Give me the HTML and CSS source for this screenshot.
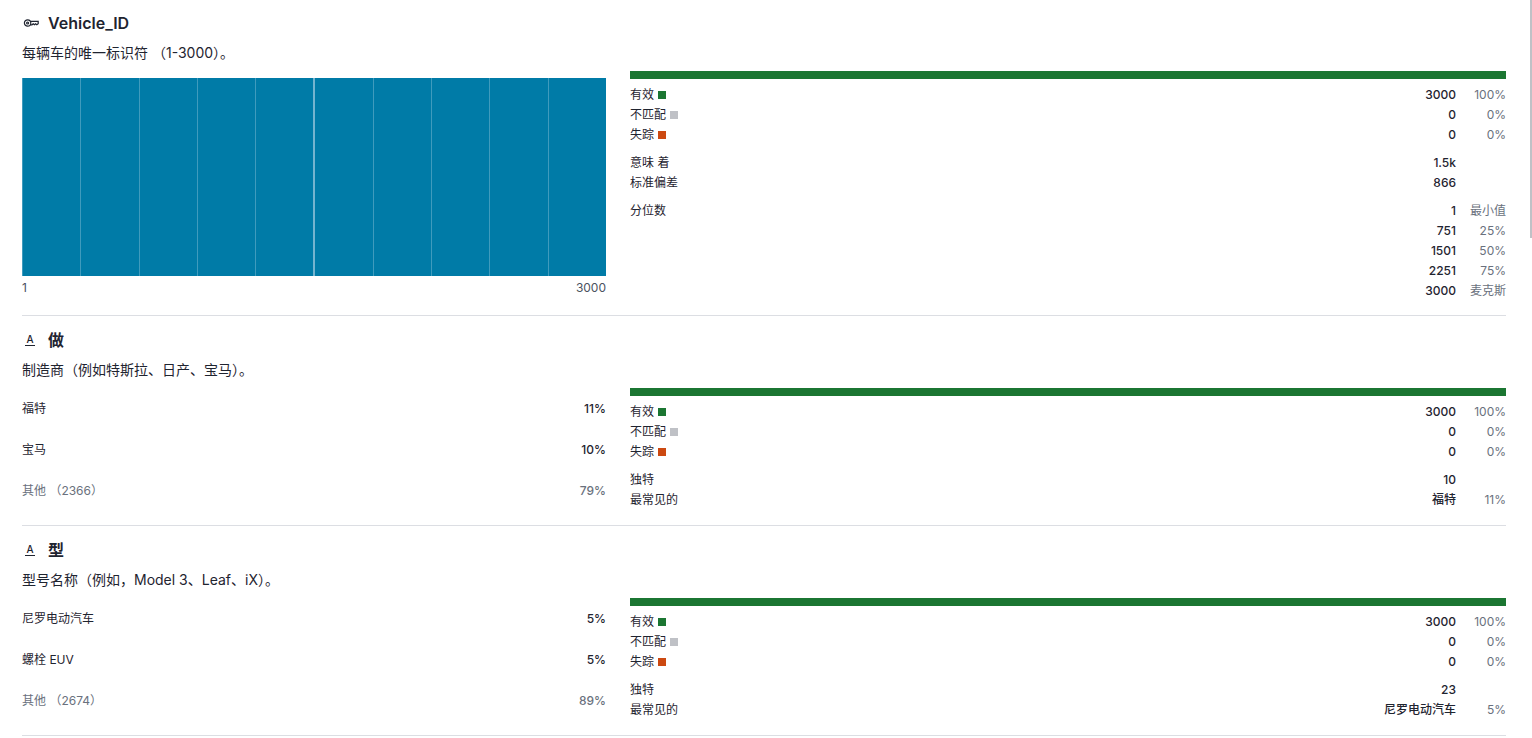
FILE: index.html
```html
<!DOCTYPE html>
<html lang="zh">

<head>
    <meta charset="utf-8">
    <title>Vehicle data</title>
    <link rel="stylesheet" href="styles.css">
</head>

<body>
    <div class="scroll-thumb"></div>
    <main class="fields">

        <section class="field first">
            <h2 class="field-name">
                <svg class="key-icon" width="16" height="16" viewBox="0 0 16 16" fill="none" stroke="currentColor" stroke-width="1.2">
                    <circle cx="4.6" cy="8" r="3.2" />
                    <circle cx="4.6" cy="8" r="1" />
                    <path d="M7.8 6.4H15.2V8.6L13.8 9.8L12.6 8.8L11.4 9.8L10.2 8.8L9 9.8H7.6" />
                </svg>
                Vehicle_ID
            </h2>
            <p class="field-desc">每辆车的唯一标识符 （1-3000）。</p>
            <div class="field-body">
                <div class="chart">
                    <div class="histogram">
                        <span></span><span></span><span></span><span></span><span></span>
                        <span class="mid"></span><span></span><span></span><span></span><span></span>
                    </div>
                    <div class="chart-axis"><span>1</span><span>3000</span></div>
                </div>
                <div class="stats">
                    <div class="quality-bar"></div>
                    <div class="stat-group">
                        <div class="stat"><span class="stat-label">有效<i class="dot valid"></i></span><b>3000</b><em>100%</em></div>
                        <div class="stat"><span class="stat-label">不匹配<i class="dot mismatch"></i></span><b>0</b><em>0%</em></div>
                        <div class="stat"><span class="stat-label">失踪<i class="dot missing"></i></span><b>0</b><em>0%</em></div>
                    </div>
                    <div class="stat-group">
                        <div class="stat"><span class="stat-label">意味 着</span><b>1.5k</b><em></em></div>
                        <div class="stat"><span class="stat-label">标准偏差</span><b>866</b><em></em></div>
                    </div>
                    <div class="stat-group">
                        <div class="stat"><span class="stat-label">分位数</span><b>1</b><em>最小值</em></div>
                        <div class="stat"><span class="stat-label"></span><b>751</b><em>25%</em></div>
                        <div class="stat"><span class="stat-label"></span><b>1501</b><em>50%</em></div>
                        <div class="stat"><span class="stat-label"></span><b>2251</b><em>75%</em></div>
                        <div class="stat"><span class="stat-label"></span><b>3000</b><em>麦克斯</em></div>
                    </div>
                </div>
            </div>
        </section>

        <section class="field">
            <h2 class="field-name"><span class="text-icon">A</span>做</h2>
            <p class="field-desc">制造商（例如特斯拉、日产、宝马）。</p>
            <div class="field-body">
                <div class="top-values">
                    <div class="top-value"><span>福特</span><b>11%</b></div>
                    <div class="top-value"><span>宝马</span><b>10%</b></div>
                    <div class="top-value other"><span>其他 （2366）</span><b>79%</b></div>
                </div>
                <div class="stats">
                    <div class="quality-bar"></div>
                    <div class="stat-group">
                        <div class="stat"><span class="stat-label">有效<i class="dot valid"></i></span><b>3000</b><em>100%</em></div>
                        <div class="stat"><span class="stat-label">不匹配<i class="dot mismatch"></i></span><b>0</b><em>0%</em></div>
                        <div class="stat"><span class="stat-label">失踪<i class="dot missing"></i></span><b>0</b><em>0%</em></div>
                    </div>
                    <div class="stat-group">
                        <div class="stat"><span class="stat-label">独特</span><b>10</b><em></em></div>
                        <div class="stat"><span class="stat-label">最常见的</span><b>福特</b><em>11%</em></div>
                    </div>
                </div>
            </div>
        </section>

        <section class="field">
            <h2 class="field-name"><span class="text-icon">A</span>型</h2>
            <p class="field-desc">型号名称（例如，Model 3、Leaf、iX）。</p>
            <div class="field-body">
                <div class="top-values">
                    <div class="top-value"><span>尼罗电动汽车</span><b>5%</b></div>
                    <div class="top-value"><span>螺栓 EUV</span><b>5%</b></div>
                    <div class="top-value other"><span>其他 （2674）</span><b>89%</b></div>
                </div>
                <div class="stats">
                    <div class="quality-bar"></div>
                    <div class="stat-group">
                        <div class="stat"><span class="stat-label">有效<i class="dot valid"></i></span><b>3000</b><em>100%</em></div>
                        <div class="stat"><span class="stat-label">不匹配<i class="dot mismatch"></i></span><b>0</b><em>0%</em></div>
                        <div class="stat"><span class="stat-label">失踪<i class="dot missing"></i></span><b>0</b><em>0%</em></div>
                    </div>
                    <div class="stat-group">
                        <div class="stat"><span class="stat-label">独特</span><b>23</b><em></em></div>
                        <div class="stat"><span class="stat-label">最常见的</span><b>尼罗电动汽车</b><em>5%</em></div>
                    </div>
                </div>
            </div>
        </section>

    </main>
</body>

</html>
```

FILE: styles.css
```css
body {
    margin: 0;
    background: #fff;
    color: #1f2430;
    font-family: Inter, "Noto Sans CJK SC", sans-serif;
    font-size: 12px;
    line-height: 20px;
}

.scroll-thumb {
    position: absolute;
    top: 0;
    right: 0;
    width: 2px;
    height: 238px;
    background: #bfc1c6;
}

.fields {
    padding: 0 26px 0 22px;
}

.field {
    padding: 12px 0 14px;
    border-bottom: 1px solid #dcdee3;
}

.field.first {
    padding-top: 11px;
}

.field-name {
    display: flex;
    align-items: center;
    margin: 0;
    font-size: 16px;
    font-weight: 600;
    line-height: 24px;
}

.key-icon {
    margin-left: 1px;
    margin-right: 9px;
}

.text-icon {
    box-sizing: border-box;
    width: 10px;
    height: 12px;
    margin: 0 13px 0 3px;
    border-bottom: 1px solid currentColor;
    font-size: 10px;
    font-weight: 500;
    line-height: 10px;
    text-align: center;
}

.field-desc {
    margin: 8px 0;
    font-size: 14px;
    line-height: 20px;
}

.field-body {
    display: grid;
    grid-template-columns: 2fr 3fr;
    gap: 24px;
}

.chart {
    padding-top: 7px;
}

.histogram {
    display: flex;
    height: 198px;
}

.histogram span {
    flex: 1;
    background: #007ba7;
    border-left: 1px solid #3f9bbd;
}

.histogram .mid {
    border-left: 2px solid #74b4cf;
}

.chart-axis {
    display: flex;
    justify-content: space-between;
    margin-top: 2px;
    color: #4b5260;
}

.quality-bar {
    height: 8px;
    margin-bottom: 6px;
    background: #1b7632;
}

.stat-group {
    margin-bottom: 8px;
}

.stat-group:last-child {
    margin-bottom: 0;
}

.stat {
    display: grid;
    grid-template-columns: 1fr auto 50px;
    height: 20px;
}

.stat b {
    font-weight: 500;
    text-align: right;
}

.stat em {
    color: #6a717d;
    font-style: normal;
    text-align: right;
}

.stat-label {
    display: flex;
    align-items: center;
}

.dot {
    width: 8px;
    height: 8px;
    margin-left: 4px;
}

.dot.valid {
    background: #1b7632;
}

.dot.mismatch {
    background: #bfc1c6;
}

.dot.missing {
    background: #cc4911;
}

.top-value {
    display: flex;
    align-items: center;
    justify-content: space-between;
    height: 41px;
}

.top-value b {
    font-weight: 500;
}

.top-value.other {
    color: #6a717d;
}
```
